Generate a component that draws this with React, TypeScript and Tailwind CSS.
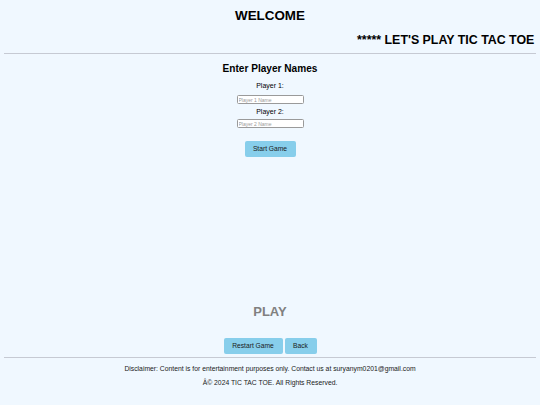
import React from "react";

export default function App() {
  return (
    <div className="min-h-[405px] bg-[#f0f8ff] text-black font-['Liberation_Sans',Arial,sans-serif] overflow-hidden">
      <h1 className="pt-[8px] text-center text-[13.4px] font-bold leading-[16px]">WELCOME</h1>
      <div className="mt-[8px] overflow-hidden whitespace-nowrap pl-[357px] text-[12.4px] font-bold leading-[16px]">
        ***** LET'S PLAY TIC TAC TOE
      </div>
      <div className="mx-[4px] mt-[5px] border-t border-[#c6cad3]" />
      <div className="flex flex-col items-center">
        <h2 className="mt-[8px] text-[10.1px] font-bold leading-[13px]">Enter Player Names</h2>
        <label className="mt-[7px] text-[7px] leading-[8px]">Player 1:</label>
        <input
          className="mt-[5px] h-[9px] w-[67px] rounded-[1.5px] border border-[#9a9a9a] bg-white px-[1px] text-[5px] outline-none placeholder:text-[#9a9a9a]"
          placeholder="Player 1 Name"
        />
        <label className="mt-[4px] text-[7px] leading-[8px]">Player 2:</label>
        <input
          className="mt-[3px] h-[9px] w-[67px] rounded-[1.5px] border border-[#9a9a9a] bg-white px-[1px] text-[5px] outline-none placeholder:text-[#9a9a9a]"
          placeholder="Player 2 Name"
        />
        <button className="mt-[13px] h-[16px] w-[51px] rounded-[2px] bg-[#87ceeb] text-[6.7px] text-[#1a1a1a]">
          Start Game
        </button>
        <div className="mt-[147px] text-[13px] font-bold leading-[16px] text-[#808080]">PLAY</div>
        <div className="mt-[18px] flex gap-[2px]">
          <button className="h-[16px] w-[59px] rounded-[2px] bg-[#87ceeb] text-[6.7px] text-[#1a1a1a]">Restart Game</button>
          <button className="h-[16px] w-[32px] rounded-[2px] bg-[#87ceeb] text-[6.7px] text-[#1a1a1a]">Back</button>
        </div>
      </div>
      <div className="mx-[4px] mt-[3px] border-t border-[#c6cad3]" />
      <div className="flex flex-col items-center text-[6.8px] leading-[10px] text-[#1a1a1a]">
        <p className="mt-[6px]">Disclaimer: Content is for entertainment purposes only. Contact us at suryanym0201@gmail.com</p>
        <p className="mt-[4px]">Â© 2024 TIC TAC TOE. All Rights Reserved.</p>
      </div>
    </div>
  );
}
